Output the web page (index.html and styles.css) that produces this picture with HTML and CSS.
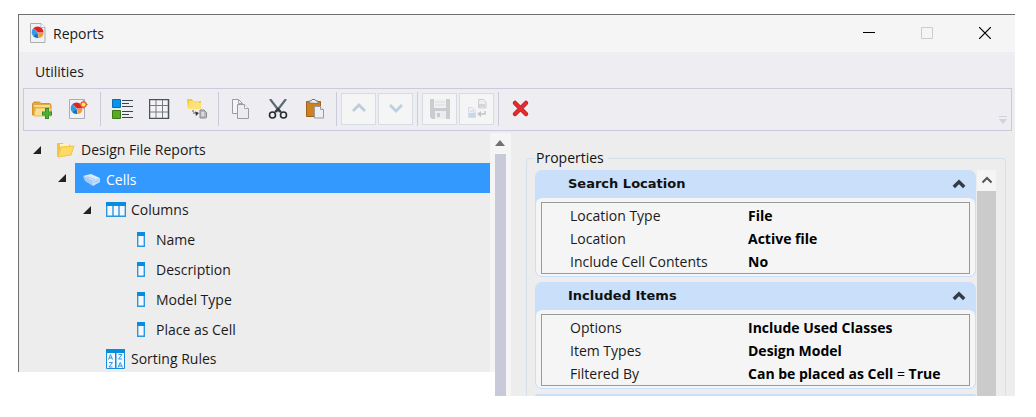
FILE: index.html
```html
<!DOCTYPE html>
<html lang="en">
<head>
<meta charset="utf-8">
<title>Reports</title>
<link rel="stylesheet" href="styles.css">
</head>
<body>
<svg class="defs" aria-hidden="true">
  <symbol id="chart" viewBox="0 0 20 20">
    <path d="M2.500.500h10.500l4 4v15H2.500z" fill="#eff1f4" stroke="#aaaeb3"/>
    <path d="M13 .5v4h4" fill="#fff" stroke="#b8bbc0"/>
    <path d="M9.500 9.500L5.500 5a6 6 0 0 0-.500 8z" fill="#2d9be8"/>
    <path d="M9.500 9.500L5 13A6 6 0 0 0 10.500 15z" fill="#1672bd"/>
    <path d="M10 10l.800 5a5 5 0 0 0 4.700-5z" fill="#f49a2c"/>
    <path d="M10 9.500L5.500 5a6 6 0 0 1 10 4.500z" fill="#e02222"/>
  </symbol>
  <symbol id="column" viewBox="0 0 8 15">
    <path d="M.7.700h6.600v13.600H.7z" fill="#f4f8fc" stroke="#2d96de" stroke-width="1.400"/>
    <path d="M0 0h8v4H0z" fill="#078ce0"/>
  </symbol>
  <symbol id="expanded" viewBox="0 0 8 8"><path d="M8 0v8H0z" fill="#222"/></symbol>
  <symbol id="collapse" viewBox="0 0 14 10"><path d="M1.800 8L7 2.800 12.200 8" fill="none" stroke="#343b45" stroke-width="3.400"/></symbol>
</svg>

<main class="window">
  <header class="titlebar">
    <svg class="icon"><use href="#chart"/></svg>
    <h1 class="title">Reports</h1>
    <button class="caption" aria-label="Minimize"><svg viewBox="0 0 12 12"><path d="M0 5.500h12" stroke="#000"/></svg></button>
    <button class="caption" aria-label="Maximize" disabled><svg viewBox="0 0 12 12"><path d="M.5.500h11v11H.5z" fill="none" stroke="#ccc"/></svg></button>
    <button class="caption" aria-label="Close"><svg viewBox="0 0 12 12"><path d="M0 0l12 12M12 0L0 12" stroke="#000" stroke-width="1.200"/></svg></button>
  </header>
  <nav class="menubar"><button class="menu">Utilities</button></nav>
  <div class="toolstrip">
    <div class="toolbar" role="toolbar" aria-label="Reports">
      <button class="tool" aria-label="New group"><svg class="icon" viewBox="0 0 20 20">
        <path d="M.5 16V4.500L2 3h5.500l1.500 1.500H18l1 1.500v10z" fill="#e5a63e" stroke="#d3942d"/>
        <path d="M2 17l1.500-8h15l.500 8z" fill="#f9df8d" stroke="#e8b955"/>
        <path d="M2 7h16" stroke="#f7db8b" stroke-width="2"/>
        <path d="M15 9v11M10 14.500h10" stroke="#318b2b" stroke-width="4"/><path d="M15 10v9M11 14.500h8" stroke="#51ae38" stroke-width="2.400"/>
      </svg></button>
      <button class="tool" aria-label="New report"><svg class="icon" viewBox="2 0 20 20">
        <path d="M2.500.500h15v19h-15z" fill="#eff1f4" stroke="#aaaeb3"/>
        <path d="M9.500 9.500L5.500 5a6 6 0 0 0-.500 8z" fill="#2d9be8"/>
        <path d="M9.500 9.500L5 13A6 6 0 0 0 10.500 15z" fill="#1672bd"/>
        <path d="M10 10l.800 5a5 5 0 0 0 4.700-5z" fill="#f49a2c"/>
        <path d="M10 9.500L5.500 5a6 6 0 0 1 10 4.500z" fill="#e02222"/>
        <path d="M16.500 1l1.500 2.500 3 2-3 1.500-1.500 3L15 7.500l-3-2 3-1.500z" fill="#f04a25"/><circle cx="16.500" cy="5.500" r="3.200" fill="#f45e28"/><circle cx="16.500" cy="5.500" r="2" fill="#ffe66a"/>
      </svg></button>
      <span class="sep"></span>
      <button class="tool" aria-label="Details"><svg class="icon wide" viewBox="1 0 22 20">
        <path d="M1.500.500h8v8h-8z" fill="#0a94ea" stroke="#096cb2"/><path d="M1.500 11.500h8v8h-8z" fill="#57aa22" stroke="#387a18"/>
        <path d="M11 1.500h11M11 7.500h11M11 12.500h11M11 18.500h11" stroke="#38454d"/><path d="M11 4.500h7M11 15.500h7" stroke="#38454d"/>
      </svg></button>
      <button class="tool" aria-label="Grid"><svg class="icon wide" viewBox="1 0 22 20">
        <path d="M1.500.500h19v19h-19z" fill="#f3f3f6" stroke="#4b535a" stroke-width="1.500"/><path d="M8 1v18M14.500 1v18M2 6.500h18M2 13h18" stroke="#747c82"/>
      </svg></button>
      <button class="tool" aria-label="Place report"><svg class="icon" viewBox="0 0 20 20">
        <path d="M0 0h5l1 2h8v8H1z" fill="#f3c83c"/><path d="M1 10l1-6h12v6z" fill="#ffe277"/><path d="M2 3h10" stroke="#fff1a8"/>
        <path d="M6 11v3h6" fill="none" stroke="#5b6064" stroke-dasharray="2 1"/><path d="M8 12.500l4 1.500-3 3z" fill="#33383d"/>
        <path d="M13 11h4l2.500 2.500v5l-1 .5H13z" fill="#b9b9bb" stroke="#88898b"/><path d="M14.500 13h2.500v4h-2.500z" fill="#dcdcdd"/>
      </svg></button>
      <span class="sep"></span>
      <button class="tool" aria-label="Copy"><svg class="icon" viewBox="0 0 20 20">
        <path d="M1.500.500h6l4 4v10h-10z" fill="#f5f5f6" stroke="#9b9c9f"/><path d="M7.500.500v4h4" fill="none" stroke="#a5a6a9"/>
        <path d="M6.500 5.500h7l4 4v10h-11z" fill="#ececee" stroke="#9b9c9f"/><path d="M13.500 5.500v4h4" fill="#fff" stroke="#a5a6a9"/>
      </svg></button>
      <button class="tool" aria-label="Cut"><svg class="icon" viewBox="0 0 20 20">
        <path d="M2 0l10 13M18 0L8 13" stroke="#5d6a74" stroke-width="2.200"/><path d="M7 13l3-3 3 3" fill="none" stroke="#333b43" stroke-width="2"/>
        <circle cx="4.500" cy="16" r="3" fill="none" stroke="#252a30" stroke-width="1.600"/><circle cx="15.500" cy="16" r="3" fill="none" stroke="#252a30" stroke-width="1.600"/>
      </svg></button>
      <button class="tool" aria-label="Paste"><svg class="icon" viewBox="0 0 20 20">
        <path d="M1.500 2.500h14v15h-14z" fill="#cf811d" stroke="#9e611b"/><path d="M4 4V2h2l1-1.500h3L11 2h2v2.500z" fill="#f0f0ef" stroke="#727a72"/>
        <path d="M9.500 7.500h6l3 3v8.500h-9z" fill="#efeff1" stroke="#999a9d"/><path d="M15.500 7.500v3h3" fill="#fff" stroke="#999a9d"/>
      </svg></button>
      <span class="sep"></span>
      <button class="tool off" aria-label="Move up" disabled><svg class="icon" viewBox="0 0 20 20"><path d="M4 12l6-6 6 6" fill="none" stroke="#bdcbdc" stroke-width="2.800"/></svg></button>
      <button class="tool off" aria-label="Move down" disabled><svg class="icon" viewBox="0 0 20 20"><path d="M4 6l6 6 6-6" fill="none" stroke="#bdcfe3" stroke-width="2.800"/></svg></button>
      <span class="sep"></span>
      <button class="tool off" aria-label="Save" disabled><svg class="icon" viewBox="0 0 20 20">
        <path d="M0 0h20v20H2l-2-2z" fill="#cbcccf"/><path d="M4 0h12v9H4z" fill="#f0f0f1"/><path d="M5 3h10M5 6h10" stroke="#dbdce0"/><path d="M5 12h11v8H5z" fill="#ededf0"/><path d="M7 14h3v4H7z" fill="#c9cbd0"/>
      </svg></button>
      <button class="tool off" aria-label="Export" disabled><svg class="icon" viewBox="0 0 20 20">
        <path d="M11.500.500h5l2.500 2.500v6h-7.500z" fill="#eee" stroke="#ccced1"/><path d="M12 5h6v3h-6z" fill="#d3d5d8"/>
        <path d="M1.500 8.500h4l3 3v7h-7z" fill="#eef2f8" stroke="#d8dde3"/><path d="M2 14h6v4H2z" fill="#c5d8f1"/><path d="M3 13l3-2 1 4" fill="none" stroke="#cbd6e5"/>
        <path d="M18 12v3h-5" fill="none" stroke="#c3c5c9" stroke-width="1.500"/><path d="M14 12v6l-4-3z" fill="#c3c5c9"/>
      </svg></button>
      <span class="sep"></span>
      <button class="tool" aria-label="Delete"><svg class="icon" viewBox="0 0 20 20"><path d="M4 4l11 11M15 4L4 15" stroke="#c91f24" stroke-width="4.500" stroke-linecap="round"/><path d="M4 4l11 11M15 4L4 15" stroke="#e52d2d" stroke-width="2.500" stroke-linecap="round"/></svg></button>
      <button class="more" aria-label="Toolbar options"><svg viewBox="0 0 8 8"><path d="M0 .5h8" stroke="#d2d2da"/><path d="M0 3h8L4 8z" fill="#d2d2da"/></svg></button>
    </div>
  </div>

  <div class="body">
    <ul class="tree">
      <li class="row level1"><svg class="toggle"><use href="#expanded"/></svg><span class="item">
        <svg class="node root" viewBox="0 0 20 16"><path d="M1 1h6l1 1.500h6V5l-11 10L1 14z" fill="#f1c63e"/><path d="M4 2h9v3H4z" fill="#fff4c4"/><path d="M2 15L5 5l13-1-3 9z" fill="#ffda65" stroke="#f4c449"/></svg>Design File Reports</span></li>
      <li class="row level2"><svg class="toggle"><use href="#expanded"/></svg><span class="item selected">
        <svg class="node cells" viewBox="0 0 18 14"><path d="M0 3l8-2 9 4-7 3z" fill="#dcecfb"/><path d="M0 3l10 5v5L2 8z" fill="#a9cdf0"/><path d="M10 8l7-3v4l-7 4z" fill="#c8e0f7"/><path d="M11 9.500l5-2M4 3.500l8 3" stroke="#9cc6ee"/></svg>Cells</span></li>
      <li class="row level3"><svg class="toggle"><use href="#expanded"/></svg><span class="item">
        <svg class="node" viewBox="0 0 20 15"><path d="M.7.700h18.600v13.600H.7z" fill="#f4f8fc" stroke="#2d96de" stroke-width="1.400"/><path d="M7 3v11M13 3v11" stroke="#2d96de" stroke-width="1.400"/><path d="M0 0h20v4H0z" fill="#078ce0"/></svg>Columns</span></li>
      <li class="row level4"><svg class="column"><use href="#column"/></svg>Name</li>
      <li class="row level4"><svg class="column"><use href="#column"/></svg>Description</li>
      <li class="row level4"><svg class="column"><use href="#column"/></svg>Model Type</li>
      <li class="row level4"><svg class="column"><use href="#column"/></svg>Place as Cell</li>
      <li class="row rules"><svg class="node sort" viewBox="0 0 20 20"><path d="M.5.500h18v19H.5z" fill="#f2f8fd" stroke="#168ddd"/><path d="M0 0h19v4H0zM9 4h1.500v16H9z" fill="#078ce0"/>
        <path d="M2.500 10.500l2-5 2 5M3 9h3M12.500 5.500H16l-3.500 4.500H16M3 13.500h3.500L3 18h3.500M12 18.500l2.200-5 2.300 5M13 17h3" fill="none" stroke="#3399df"/></svg>Sorting Rules</li>
    </ul>
    <div class="scroll"><svg class="arrow" viewBox="0 0 10 6"><path d="M5 0l5 6H0z" fill="#717171"/></svg><div class="thumb"></div></div>

    <section class="details">
      <fieldset class="properties">
        <legend>Properties</legend>
        <div class="viewport">
          <div class="groups">
            <section class="group">
              <h2 class="heading">Search Location<button class="fold" aria-label="Collapse Search Location"><svg><use href="#collapse"/></svg></button></h2>
              <div class="panel">
                <dl class="values">
                  <dt>Location Type</dt><dd>File</dd>
                  <dt>Location</dt><dd>Active file</dd>
                  <dt>Include Cell Contents</dt><dd>No</dd>
                </dl>
              </div>
            </section>
            <section class="group">
              <h2 class="heading">Included Items<button class="fold" aria-label="Collapse Included Items"><svg><use href="#collapse"/></svg></button></h2>
              <div class="panel">
                <dl class="values">
                  <dt>Options</dt><dd>Include Used Classes</dd>
                  <dt>Item Types</dt><dd>Design Model</dd>
                  <dt>Filtered By</dt><dd>Can be placed as Cell <span class="op">=</span> True</dd>
                </dl>
              </div>
            </section>
            <div class="next"></div>
          </div>
          <div class="bar"><svg class="up" viewBox="0 0 10 8"><path d="M.5 6.500L5 2l4.500 4.500" fill="none" stroke="#555" stroke-width="2"/></svg><div class="grip"></div></div>
        </div>
      </fieldset>
    </section>
  </div>
</main>
</body>
</html>
```

FILE: styles.css
```css
* { box-sizing: border-box; }
body {
  margin: 0;
  padding: 14px 21px 20px 18px;
  background: #fff;
  color: #1a1a1a;
  font: 14px/20px "Open Sans", "Noto Sans", sans-serif;
}
.defs { position: absolute; width: 0; height: 0; }
button { padding: 0; border: 0; background: none; font: inherit; color: inherit; }
svg { display: block; flex: none; }
h1, h2, ul, dl, dd, fieldset { margin: 0; padding: 0; }
.icon { width: 20px; height: 20px; }
.wide { width: 22px; }

.window { border-top: 1px solid #717171; }
.titlebar, .menubar, .toolstrip, .tree { border-left: 1px solid #717171; }
.titlebar { display: flex; align-items: center; height: 37px; padding: 0 1px 1px 9px; background: #f5f5f5; }
.title { flex: 1; padding: 1px 0 0 5px; font-size: 14px; font-weight: 400; }
.caption { display: grid; place-items: center; width: 58px; height: 36px; }
.caption svg { width: 12px; height: 12px; }
.menubar { display: flex; align-items: center; height: 36px; padding: 3px 16px 0; background: #eeedf1; }

.toolstrip { padding: 0 3px 2px 4px; background: #eeedee; }
.toolbar { display: flex; align-items: center; height: 43px; padding-bottom: 2px; border: 1px solid #c9cadb; background: #eeedf1; }
.tool { display: grid; place-items: center; width: 35px; height: 32px; }
.tool + .tool { margin-left: 2px; }
.off { border: 1px solid #d5dce4; background: #f5f5f5; }
.sep { width: 1px; height: 34px; margin: 0 4px; background: #c9cadb; }
.more { align-self: flex-end; margin: 0 4px 4px auto; }
.more svg { width: 8px; height: 8px; }

.body { display: grid; grid-template-columns: minmax(0, 477fr) 16px minmax(0, 504fr); }
.tree { align-self: start; list-style: none; border-right: 5px solid #f5f5f5; background: #eeedee; }
.row { display: flex; align-items: center; height: 30px; padding-top: 3px; }
.level1 { padding-left: 14px; }
.level2 { padding: 0 0 0 39px; }
.level3 { padding-left: 64px; }
.level4 { padding-left: 118px; }
.rules { height: 29px; padding-left: 87px; }
.toggle { width: 8px; height: 8px; }
.item { display: flex; flex: 1; align-items: center; padding-left: 15px; }
.selected { align-self: stretch; margin-left: 9px; padding: 3px 0 0 8px; background: #3399ff; color: #fff; }
.node { width: 20px; height: 15px; margin-right: 5px; }
.root { height: 16px; }
.cells { width: 18px; height: 14px; }
.sort { height: 20px; }
.column { width: 8px; height: 15px; margin-right: 11px; }

.scroll { display: flex; flex-direction: column; background: #f5f5f5; }
.arrow { width: 10px; height: 6px; margin: 7px 0 8px; }
.thumb { flex: 1; width: 11px; background: #c9cad9; }

.details { padding: 15px 9px 0 15px; background: #eeedee; }
.properties { min-width: 0; padding: 2px 9px 0 8px; border: 1px solid #d7dfe8; border-bottom: 0; border-radius: 4px 4px 0 0; }
legend { padding: 0 4px 0 1px; color: #111; }
.viewport { display: flex; gap: 1px; }
.groups { display: grid; flex: 1; gap: 5px; }
.group { border: 1px solid #c9dffa; border-top: 0; border-radius: 7px; background: #c9dffa; }
.heading { display: flex; align-items: center; justify-content: space-between; height: 28px; padding: 0 9px 0 32px; color: #111; font: bold 13px/20px "DejaVu Sans", sans-serif; }
.fold svg { width: 14px; height: 10px; }
.panel { padding: 4px 5px 2px; border-radius: 6px; background: #f5f5f5; }
.values {
  display: grid;
  grid-template-columns: 178fr 221fr;
  padding: 1px 0 0 28px;
  border: 1px solid #999;
  line-height: 23px;
}
dd { color: #000; font-weight: 700; }
.op { font-weight: 400; }
.next { height: 2px; border-radius: 4px 4px 0 0; background: #c9dffa; }
.bar { display: flex; flex-direction: column; align-items: center; width: 19px; background: #f5f5f5; }
.up { width: 10px; height: 8px; margin: 6px 0 7px; }
.grip { flex: 1; width: 19px; background: #cbcbcb; }
```
